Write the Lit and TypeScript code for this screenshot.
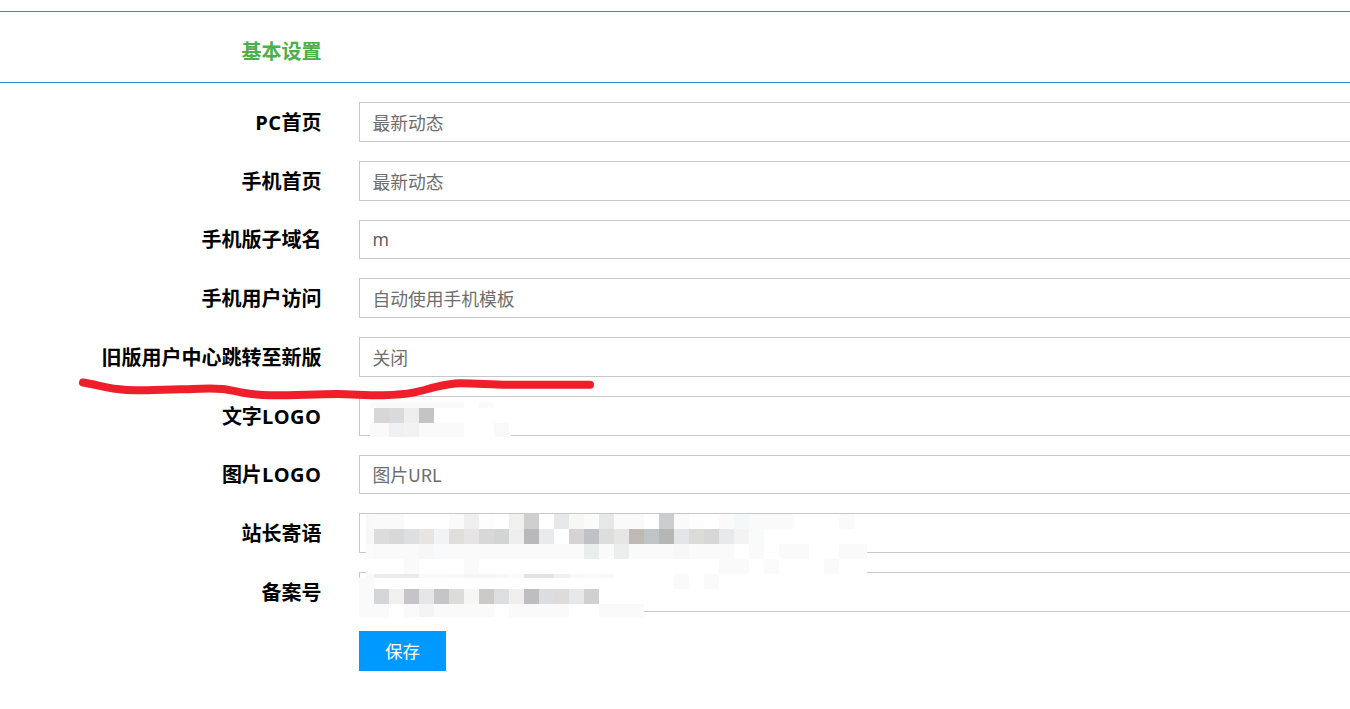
import { LitElement, html, css, svg } from "lit";
import { customElement } from "lit/decorators.js";

type Band = { y: number; h: number; colors: string[] };

const W = "fff";
const F = "fafafa";

// Pixelated areas that hide text in the reference. Each cell is 15px wide; the first cell of a
// band starts at x=359 and is clipped to the left/right limits passed to cells().
const slogan: Band[] = [
  { y: 514, h: 15, colors: ["f9f9f9", F, F, W, W, W, F, "efefef", "fdfdfd", W, "f0f0ee", "cfcfcf", W, "e6e7e9", "f7f7f5", "fbfbfb", "e6e8e7", F, F, W, "cbccd0", F, "fdfdfd", W, F, "f3f8f9", F, F, F, W, W, W, F, W] },
  { y: 529, h: 15, colors: ["f7f7f7", "dcdcdc", "d8d8d8", "dddfe1", "e6e5e2", "f1f3f6", "dfdedb", "e6e4e4", "d8d8d8", "d3d5d4", "eeeeec", "b9b9bb", "e9eaec", W, "d5d3d4", "c0c1c3", "dddddd", "e6e6e4", "bfb9b5", "bfc4c7", "b6b6b4", "e3e5e8", "dbdbd9", "d7d7d7", "e7e9eb", "f3f3f3", "f9fbfb", W, W, W, W, W, W, W] },
  { y: 544, h: 15, colors: ["fbfbfb", F, F, F, "f7f7f7", "f9fafc", F, F, F, F, F, F, F, F, F, "ebedec", F, "ebeeed", F, F, F, "f7f7f7", F, F, F, W, F, W, F, F, W, W, F, F] },
  { y: 559, h: 15, colors: [W, W, W, F, W, W, W, F, W, W, W, W, W, W, W, W, W, W, W, W, W, W, W, W, F, F, W, "fbfbfb", W, W, W, F, W, W] },
  { y: 574, h: 15, colors: ["f9f9f9", "ececec", "ebebeb", "e9eaec", "f9f9f9", "f9f9f9", "f7f7f7", "f5f5f5", "f5f5f5", "f7f7f7", "fbfbfb", "e2e3e5", "e2e2e2", "f1f1f1", "f8f8f8", "fbfbfb", "f8f8f8", W, W, W, W, F, W, F, W, W, W, W, W, W, W, W, W, W] },
];

const filing: Band[] = [
  { y: 578, h: 11, colors: [F] },
  { y: 589, h: 15, colors: ["f9f9f9", "d3d5d6", "f0f0ee", "c6c4c9", "e5e6e8", "c5c4c9", "dcdcda", "f6f6f4", "cbcac8", "dcdedf", "f0efed", "bebdc2", "dcdde1", "dedcda", "e6e7e9", "d0d0d0"] },
  { y: 604, h: 13, colors: [F, F, W, F, "f4f4f4", F, F, F, F, W, F, F, F, F, W, W, F, F, F] },
];

const logo: Band[] = [
  { y: 402, h: 6, colors: [F, F, F, F, F, F, F, W, F, W] },
  { y: 408, h: 15, colors: [W, "d8d6d6", "d9dadc", "eeeeee", "c5c3c3"] },
  { y: 423, h: 14, colors: [F, F, "eff0f2", "f2f2f2", F, F, F, W, W, "f9f9f9", W] },
];

const cells = (bands: Band[], left: number, right: number) =>
  bands.flatMap((b) =>
    b.colors.map((c, i) => {
      const x0 = Math.max(left, 359 + i * 15);
      const x1 = Math.min(right, 359 + (i + 1) * 15);
      return svg`<rect x=${x0} y=${b.y} width=${Math.max(0, x1 - x0)} height=${b.h} fill=${"#" + c}></rect>`;
    })
  );

const rows: { latin?: string; label: string; labelEnd?: string; value: string; cls?: string }[] = [
  { latin: "PC", label: "首页", value: "最新动态" },
  { label: "手机首页", value: "最新动态" },
  { label: "手机版子域名", value: "m", cls: "typed" },
  { label: "手机用户访问", value: "自动使用手机模板" },
  { label: "旧版用户中心跳转至新版", value: "关闭" },
  { label: "文字", labelEnd: "LOGO", value: "" },
  { label: "图片", labelEnd: "LOGO", value: "图片URL" },
  { label: "站长寄语", value: "" },
  { label: "备案号", value: "" },
];

@customElement("app-root")
export class AppRoot extends LitElement {
  static styles = css`
    :host {
      display: block;
      position: relative;
      height: 709px;
      overflow: hidden;
      background: #fff;
      font-family: "Open Sans", "Noto Sans CJK SC", sans-serif;
    }
    .page {
      padding-top: 11px;
    }
    .section {
      display: flex;
      align-items: center;
      height: 70px;
      border-top: 1px solid #2b8fdf;
      border-bottom: 1px solid #2b8fdf;
    }
    .section h2 {
      width: 321.5px;
      margin: 0;
      padding-top: 8px;
      text-align: right;
      font-size: 20px;
      line-height: 28px;
      font-weight: 700;
      color: #4cb04a;
      font-family: "Noto Sans CJK SC", sans-serif;
    }
    .form {
      display: flex;
      flex-direction: column;
      gap: 19px;
      padding-top: 19px;
    }
    .row {
      display: flex;
      align-items: center;
      gap: 37.5px;
      height: 39.75px;
    }
    .label {
      flex: none;
      width: 321.5px;
      padding-top: 2px;
      text-align: right;
      font-size: 20px;
      line-height: 28px;
      font-weight: 700;
      color: #000;
      white-space: nowrap;
    }
    .latin {
      letter-spacing: 0.5px;
    }
    .field {
      flex: none;
      box-sizing: border-box;
      width: 1100px;
      height: 100%;
      display: flex;
      align-items: center;
      padding-left: 12.5px;
      border: 1px solid #c8c8c8;
      font-size: 17.75px;
      color: #6e6e6e;
      background: #fff;
      font-family: "Noto Sans CJK SC", sans-serif;
      font-weight: 400;
    }
    .field.typed {
      font-family: "Open Sans", sans-serif;
      color: #555;
    }
    .actions {
      padding-left: 359px;
    }
    button {
      display: block;
      width: 87px;
      height: 40px;
      padding: 0;
      border: 0;
      background: #0099ff;
      color: #fff;
      font-size: 17.5px;
      font-family: "Noto Sans CJK SC", sans-serif;
      font-weight: 400;
    }
    .overlay {
      position: absolute;
      left: 0;
      top: 0;
      pointer-events: none;
    }
  `;

  render() {
    return html`
      <div class="page">
        <div class="section"><h2>基本设置</h2></div>
        <div class="form">
          ${rows.map(
            (r) => html`
              <div class="row">
                <div class="label">${r.latin ? html`<span class="latin">${r.latin}</span>` : ""}${r.label}${r.labelEnd
                    ? html`<span class="latin">${r.labelEnd}</span>`
                    : ""}</div>
                <div class="field ${r.cls ?? ""}">${r.value}</div>
              </div>
            `
          )}
          <div class="actions"><button>保存</button></div>
        </div>
      </div>
      <svg class="overlay" width="1350" height="709" viewBox="0 0 1350 709" aria-hidden="true">
        <g shape-rendering="crispEdges">
          ${cells(logo, 370, 511)}
          ${cells(slogan, 366, 867)}
          <rect x="374" y="578" width="272" height="11" fill="#fff"></rect>
          ${cells(filing, 359, 646)}
          <rect x="359" y="578" width="15" height="39" fill="#fafafa"></rect>
        </g>
        <path
          d="M83 382.5 C95 384.5 106 387.5 117 389 C124 390 130 390.3 137 390.3 C150 390.3 165 389.6 180 389.3 C195 389 210 387.8 222 389 C230 389.8 236 391.6 243 392.7 C252 394.2 260 395.3 270 395.3 C292 395.6 315 394 337 394 C352 394 368 395.6 383 395.3 C394 395 404 394.6 413 392.7 C421 391 429 388.6 437 386.7 C445 384.8 452 383.4 460 383.3 C476 383.2 491 384.7 507 384.7 L590 384.7"
          fill="none"
          stroke="#ee1f2b"
          stroke-width="8"
          stroke-linecap="round"
          stroke-linejoin="round"
        ></path>
      </svg>
    `;
  }
}
